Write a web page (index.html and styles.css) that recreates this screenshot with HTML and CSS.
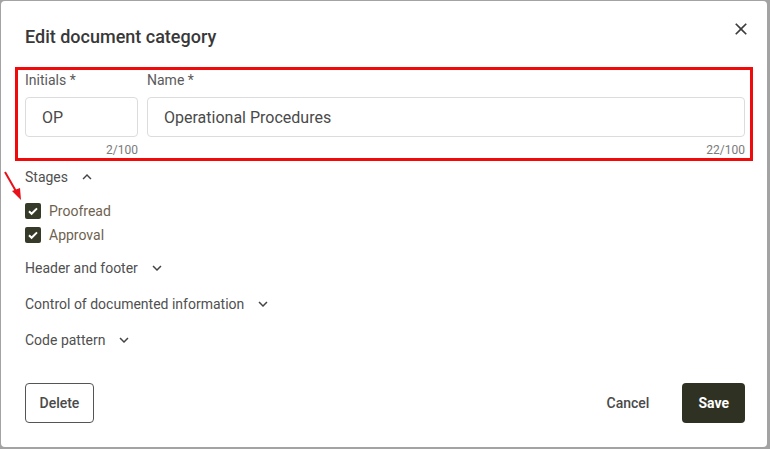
FILE: index.html
```html
<!DOCTYPE html>
<html>
<head>
<meta charset="utf-8">
<link rel="stylesheet" href="styles.css">
</head>
<body>
<div class="dialog">
  <div class="header">
    <h1 class="title">Edit document category</h1>
    <button class="close" aria-label="Close">
      <svg width="20" height="20" viewBox="0 0 24 24"><path fill="#3c3c3c" d="M19 6.41L17.59 5 12 10.59 6.41 5 5 6.41 10.59 12 5 17.59 6.41 19 12 13.41 17.59 19 19 17.59 13.41 12z"/></svg>
    </button>
  </div>

  <div class="highlight">
    <div class="fields">
      <div class="field">
        <label class="label">Initials *</label>
        <div class="input">OP</div>
        <div class="counter">2/100</div>
      </div>
      <div class="field">
        <label class="label">Name *</label>
        <div class="input">Operational Procedures</div>
        <div class="counter">22/100</div>
      </div>
    </div>
  </div>

  <div class="accordion">
    <div class="section open">
      <div class="section-head">Stages
        <svg class="chev" width="18" height="18" viewBox="0 0 24 24"><path fill="#444" d="M12 8l-6 6 1.41 1.41L12 10.83l4.59 4.58L18 14z"/></svg>
      </div>
      <div class="stage-list">
        <div class="stage"><span class="cb"><svg width="16" height="16" viewBox="0 0 16 16"><path d="M4 8.2l2.6 2.6L12 5.4" fill="none" stroke="#fff" stroke-width="2"/></svg></span>Proofread</div>
        <div class="stage"><span class="cb"><svg width="16" height="16" viewBox="0 0 16 16"><path d="M4 8.2l2.6 2.6L12 5.4" fill="none" stroke="#fff" stroke-width="2"/></svg></span>Approval</div>
      </div>
    </div>
    <div class="section">
      <div class="section-head">Header and footer
        <svg class="chev" width="18" height="18" viewBox="0 0 24 24"><path fill="#444" d="M16.59 8.59L12 13.17 7.41 8.59 6 10l6 6 6-6z"/></svg>
      </div>
    </div>
    <div class="section">
      <div class="section-head">Control of documented information
        <svg class="chev" width="18" height="18" viewBox="0 0 24 24"><path fill="#444" d="M16.59 8.59L12 13.17 7.41 8.59 6 10l6 6 6-6z"/></svg>
      </div>
    </div>
    <div class="section">
      <div class="section-head">Code pattern
        <svg class="chev" width="18" height="18" viewBox="0 0 24 24"><path fill="#444" d="M16.59 8.59L12 13.17 7.41 8.59 6 10l6 6 6-6z"/></svg>
      </div>
    </div>
  </div>

  <div class="footer">
    <button class="btn btn-outline">Delete</button>
    <div class="actions">
      <button class="btn btn-text">Cancel</button>
      <button class="btn btn-primary">Save</button>
    </div>
  </div>
</div>

<svg class="arrow" width="30" height="40" viewBox="0 0 30 40">
  <line x1="5" y1="3" x2="17" y2="24" stroke="#e8101a" stroke-width="2"/>
  <polygon points="21,31 12,22 20,19" fill="#e8101a"/>
</svg>
</body>
</html>
```

FILE: styles.css
```css
* { box-sizing: border-box; }
html, body { margin: 0; padding: 0; }
body {
  background: #a3a3a3;
  font-family: Roboto, "Liberation Sans", sans-serif;
  width: 770px;
  height: 449px;
  overflow: hidden;
  position: relative;
}
.dialog {
  margin: 1px 0 0 1px;
  width: 766px;
  height: 446px;
  background: #fff;
  border-radius: 4px;
  padding: 24px 22px 24px 24px;
  display: flex;
  flex-direction: column;
}
.header {
  display: flex;
  justify-content: space-between;
  align-items: flex-start;
}
.title {
  margin: 0;
  font-size: 18px;
  line-height: 24px;
  font-weight: 500;
  color: #383838;
}
.close {
  border: 0;
  background: none;
  padding: 0;
  margin: -6px -6px 0 0;
  width: 20px;
  height: 20px;
  display: flex;
}
.highlight {
  margin: 18px -8px 0 -10px;
  border: 3px solid #f00a0a;
  padding: 0 5px 0 7px;
}
.fields {
  display: grid;
  grid-template-columns: 113px 1fr;
  column-gap: 9px;
}
.field { display: flex; flex-direction: column; }
.label {
  font-size: 14px;
  line-height: 20px;
  color: #5a5a5a;
}
.input {
  margin-top: 7px;
  height: 40px;
  border: 1px solid #dcdcdc;
  border-radius: 4px;
  padding: 0 16px;
  font-size: 16px;
  line-height: 39px;
  color: #4a4a4a;
}
.counter {
  margin-top: 5px;
  font-size: 12px;
  line-height: 16px;
  color: #7a7a7a;
  text-align: right;
}
.accordion {
  margin-top: 6px;
  display: flex;
  flex-direction: column;
}
.section + .section { margin-top: 16px; }
.section.open + .section { margin-top: 13px; }
.section-head {
  display: flex;
  align-items: center;
  font-size: 14px;
  line-height: 20px;
  height: 20px;
  color: #505050;
}
.chev { margin-left: 10px; }
.stage-list {
  padding-top: 14px;
  display: flex;
  flex-direction: column;
  gap: 4px;
}
.stage {
  display: flex;
  align-items: center;
  height: 20px;
  font-size: 14px;
  color: #6e624f;
}
.cb {
  width: 16px;
  height: 16px;
  border-radius: 2px;
  background: #363a28;
  margin-right: 8px;
  display: flex;
}
.footer {
  margin-top: auto;
  display: flex;
  justify-content: space-between;
  align-items: center;
}
.actions { display: flex; gap: 17px; }
.btn {
  height: 40px;
  font-family: Roboto, "Liberation Sans", sans-serif;
  font-size: 14px;
  font-weight: 500;
  border-radius: 4px;
  padding: 0 15px;
  background: none;
  border: 0;
  color: #4a4a4a;
}
.btn-outline { border: 1px solid #555; padding: 0 13.5px; }
.btn-text { padding: 0 16px; }
.btn-primary {
  background: #2f3222;
  color: #fff;
  font-weight: 700;
  padding: 0 16px;
}
.arrow {
  position: absolute;
  left: 0;
  top: 169px;
}
```
